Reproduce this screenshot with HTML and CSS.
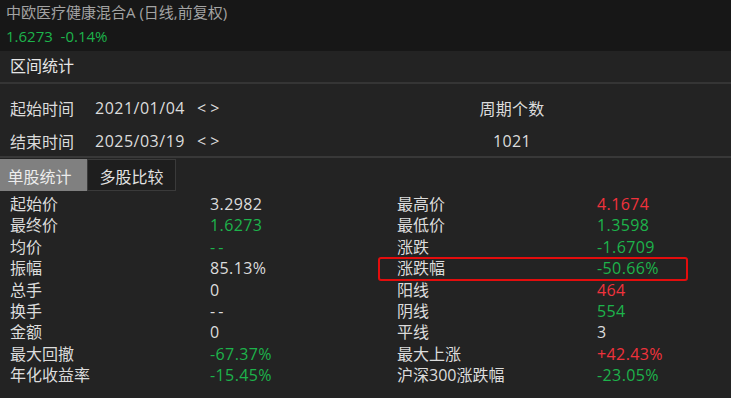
FILE: index.html
```html
<!DOCTYPE html>
<html lang="zh-CN">
<head>
    <meta charset="UTF-8">
    <title>区间统计</title>
    <link rel="stylesheet" href="styles.css">
</head>
<body>
    <div class="quote">
        <div class="quote-title">中欧医疗健康混合A (日线,前复权)</div>
        <div class="quote-price green">1.6273 &nbsp;-0.14%</div>
    </div>

    <div class="panel-head">区间统计</div>

    <div class="range">
        <div class="range-row">
            <span class="range-label">起始时间</span>
            <span class="range-date">2021/01/04</span>
            <span class="range-arrows">&lt; &gt;</span>
            <span class="range-extra">周期个数</span>
        </div>
        <div class="range-row">
            <span class="range-label">结束时间</span>
            <span class="range-date">2025/03/19</span>
            <span class="range-arrows">&lt; &gt;</span>
            <span class="range-extra">1021</span>
        </div>
    </div>

    <div class="tabs">
        <div class="tab active">单股统计</div>
        <div class="tab">多股比较</div>
    </div>

    <div class="stats">
        <div class="stats-col left">
            <div class="stat"><span>起始价</span><span>3.2982</span></div>
            <div class="stat"><span>最终价</span><span class="green">1.6273</span></div>
            <div class="stat"><span>均价</span><span class="green dash">--</span></div>
            <div class="stat"><span>振幅</span><span>85.13%</span></div>
            <div class="stat"><span>总手</span><span>0</span></div>
            <div class="stat"><span>换手</span><span class="dash">--</span></div>
            <div class="stat"><span>金额</span><span>0</span></div>
            <div class="stat"><span>最大回撤</span><span class="green">-67.37%</span></div>
            <div class="stat"><span>年化收益率</span><span class="green">-15.45%</span></div>
        </div>
        <div class="stats-col right">
            <div class="stat"><span>最高价</span><span class="red">4.1674</span></div>
            <div class="stat"><span>最低价</span><span class="green">1.3598</span></div>
            <div class="stat"><span>涨跌</span><span class="green">-1.6709</span></div>
            <div class="stat marked"><span>涨跌幅</span><span class="green">-50.66%</span></div>
            <div class="stat"><span>阳线</span><span class="red">464</span></div>
            <div class="stat"><span>阴线</span><span class="green">554</span></div>
            <div class="stat"><span>平线</span><span>3</span></div>
            <div class="stat"><span>最大上涨</span><span class="red">+42.43%</span></div>
            <div class="stat"><span>沪深300涨跌幅</span><span class="green">-23.05%</span></div>
        </div>
    </div>
</body>
</html>
```

FILE: styles.css
```css
body {
    margin: 0;
    background-color: #232323;
    color: #dcdcdc;
    font-family: "Open Sans", "Noto Sans CJK SC", sans-serif;
    font-size: 16px;
}
.green {
    color: #1db34b; /* fall */
}
.red {
    color: #f0323c; /* rise */
}
.quote {
    height: 51px;
    padding: 0 6px;
    background-color: #171717;
}
.quote-title {
    height: 24px;
    line-height: 24px;
    font-size: 15px;
    color: #a3a3a3;
}
.quote-price {
    height: 24px;
    line-height: 24px;
    font-size: 15px;
}
.panel-head {
    height: 31px;
    line-height: 31px;
    padding-left: 10px;
    border-bottom: 2px solid #353535;
    color: #e6e6e6;
}
.range {
    display: flex;
    flex-direction: column;
    gap: 3px;
    padding-top: 9px;
    border-bottom: 2px solid #383838;
}
.range-row {
    display: flex;
    align-items: center;
    height: 30px;
    padding-left: 10px;
}
.range-label {
    width: 85px;
}
.range-date {
    width: 102px;
    letter-spacing: 0.5px;
}
.range-arrows {
    width: 180px;
}
.range-extra {
    width: 270px;
    text-align: center;
    letter-spacing: 0.3px;
}
.tabs {
    display: flex;
    margin-top: 1px;
    height: 32px;
}
.tab {
    box-sizing: border-box;
    width: 89px;
    padding-top: 3px;
    line-height: 29px;
    text-align: center;
    border: 1px solid #3a3a3a;
    background-color: #1e1e1e;
    color: #e2e2e2;
}
.tab.active {
    width: 87px;
    padding-right: 8px;
    border-color: #808080;
    background-color: #808080;
    color: #ececec;
}
.stats {
    display: flex;
    margin-top: 3px;
}
.stats-col.left {
    width: 369px;
    padding-left: 10px;
}
.stats-col.right {
    width: 308px;
}
.stat {
    display: grid;
    grid-template-columns: 200px 1fr;
    height: 21.4px;
    line-height: 21.4px;
    white-space: nowrap;
}
.stats-col.right .stat {
    padding-left: 18px;
}
.stat span + span {
    letter-spacing: 0.4px;
}
.stat span.dash {
    letter-spacing: 3px;
}
.stat.marked {
    outline: 2px solid #e30d0d;
    outline-offset: -1px;
    border-radius: 2px;
}
```
